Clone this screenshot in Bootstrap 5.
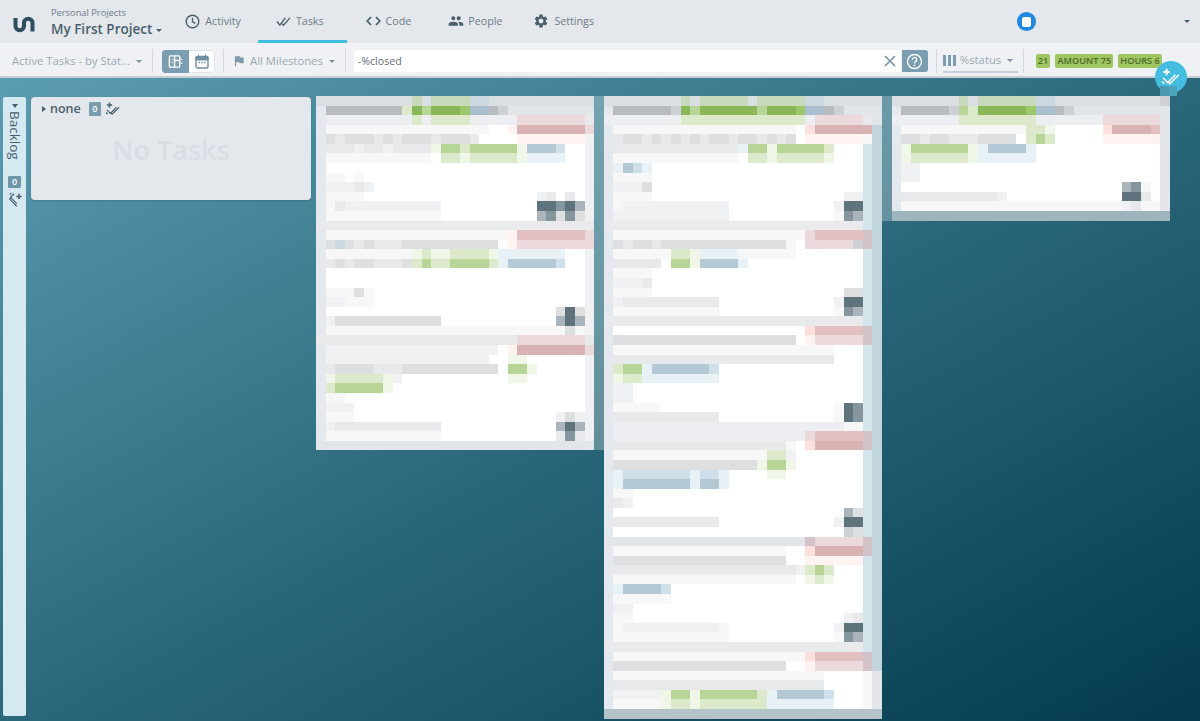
<!DOCTYPE html>
<html lang="en">
<head>
    <meta charset="UTF-8">
    <title>My First Project - Tasks</title>
    <meta name="viewport" content="width=device-width, initial-scale=1">
    <link href="https://cdn.jsdelivr.net/npm/bootstrap@5.3.3/dist/css/bootstrap.min.css" rel="stylesheet">
    <style>
        html, body { height: 721px; overflow: hidden; }
        body { font-family: "Open Sans", "Noto Sans", sans-serif; font-size: 12px; color: #6b7c85; background: #e4e7ec; }

        /* top bar */
        .top-bar { height: 43px; background: #e4e7ec; }
        .brand-logo { width: 40px; height: 43px; margin-left: 3px; margin-right: 8px; flex: none; }
        .project-org { font-size: 9.3px; line-height: 12px; color: #6f7f88; padding-top: 7px; }
        .project-name { font-size: 13.5px; line-height: 20px; font-weight: 600; color: #4a5f6b; text-decoration: none; }
        .project-name.dropdown-toggle::after { vertical-align: .18em; margin-left: 4px; border-width: 3.5px 3.5px 0; }
        .tab-nav { margin-left: 4px; }
        .tab-nav .nav-link { height: 43px; padding: 2px 18px 0; display: flex; align-items: center; gap: 5px; color: #6b7c85; font-size: 10.7px; border-bottom: 3px solid transparent; }
        .tab-nav .nav-item:first-child .nav-link { padding-left: 19px; padding-right: 17px; }
        .tab-nav .nav-link.active { border-bottom-color: #3fbfe0; padding-right: 23px; }
        .tab-nav .nav-item:nth-child(3) .nav-link { padding-left: 19px; padding-right: 19px; }
        .tab-nav .nav-item:nth-child(4) .nav-link { padding-right: 13px; gap: 4px; }
        .tab-nav svg { flex: none; fill: #4a5f6b; }
        .user-dot { width: 19px; height: 19px; border-radius: 50%; background: #1e88e5; margin-left: auto; margin-right: 148px; }
        .user-dot i { width: 9px; height: 10px; background: #fff; border-radius: 2px; display: block; }
        .user-caret { border-top: 3.5px solid #4a5f6b; border-left: 3px solid transparent; border-right: 3px solid transparent; margin-right: 10px; }

        /* filter bar */
        .filter-bar { height: 35px; background: #eff1f4; border-bottom: 2px solid #c9ced3; padding: 3px 0 0 12px; }
        .filter-link { color: #9aa9b2; font-size: 11.3px; text-decoration: none; white-space: nowrap; }
        .filter-link.dropdown-toggle::after { vertical-align: .15em; margin-left: 6px; border-width: 3.5px 3.5px 0; color: #7f929d; }
        .bar-sep { width: 1px; height: 24px; background: #d5d9de; flex: none; margin-left: 10px; }
        .view-group { margin-left: 9px; }
        .view-btn { width: 27px; height: 23px; padding: 0; display: flex; align-items: center; justify-content: center; background: #fff; border: 1px solid #e1e5ea; border-radius: 3px; }
        .view-btn.active, .view-btn.active:hover { background: #7a9db0; border-color: #7a9db0; }
        .search-box { width: 574px; height: 22px; }
        .search-box .form-control { height: 22px; min-height: 0; padding: 0 0 0 4px; border: 0; border-radius: 3px 0 0 3px; font-size: 10.6px; color: #5f6e76; box-shadow: none; }
        .search-clear { width: 22px; background: #fff; display: flex; align-items: center; justify-content: center; }
        .search-help { width: 26px; background: #7a9db0; display: flex; align-items: center; justify-content: center; border-radius: 0 3px 3px 0; margin-left: 1px !important; }
        .group-pick { height: 23px; width: 75px; margin-left: 6px; border-bottom: 2px solid #c5d0d8; color: #9aa9b2; }
        .group-pick + .bar-sep { margin-left: 5px; }
        .stat-list { gap: 5px; }
        .stat-badge { background: #9fc660; color: #4d6b2b; font-size: 9.2px; font-weight: 600; border-radius: 2px; padding: 0 2px; height: 14px; line-height: 14px; letter-spacing: 0; }

        /* add task button */
        .add-fab { position: absolute; left: 1155px; top: 61px; width: 32px; height: 32px; border-radius: 50%; background: #45bde0; display: flex; align-items: center; justify-content: center; z-index: 3; }
        .fab-chip { position: absolute; top: 86px; height: 10px; width: 9px; z-index: 4; }
        .fab-chip.one { left: 1160px; background: #4b9ab0; }
        .fab-chip.two { left: 1169px; width: 8px; background: #4ea4bc; }

        /* board */
        .board { height: 643px; padding: 18px 0 0 3px; overflow: hidden; background: linear-gradient(to bottom right, #5b9db1 0%, #2a6679 52%, #033a4d 100%); }
        .backlog-strip { width: 23px; height: 619px; margin-top: 1px; background: #d5e9f1; border-radius: 2px; flex: none; padding-top: 7px; }
        .strip-caret { border-top: 4px solid #4a5f6b; border-left: 3.500px solid transparent; border-right: 3.500px solid transparent; }
        .strip-title { writing-mode: vertical-rl; font-size: 13.5px; font-weight: 500; color: #4a5f6b; line-height: 14px; margin-top: 3px; }
        .count-chip { background: #6f97aa; color: #fff; font-size: 9px; font-weight: 600; border-radius: 1px; width: 13px; height: 12px; line-height: 12px; text-align: center; }
        .strip-add { transform: rotate(90deg); }
        .swimlane { width: 280px; height: 103px; margin: 1px 5px 0; background: #e4e7ec; border-radius: 4px; flex: none; padding: 5px 0 0 11px; box-shadow: 0 1px 2px rgba(0,0,0,.15); }
        .lane-caret { border-left: 4px solid #4a5f6b; border-top: 3.500px solid transparent; border-bottom: 3.500px solid transparent; }
        .lane-name { font-size: 12.5px; font-weight: 600; color: #4a5f6b; line-height: 14px; }
        .lane-count { width: 12px; height: 14px; line-height: 14px; background: #7a9db0; }
        .lane-empty { font-size: 27px; font-weight: 600; color: #d9dde4; line-height: 32px; text-align: center; margin: 18px 0 0 -11px; }

        /* blurred task columns */
        .mosaic { display: grid; grid-auto-rows: 9.58px; flex: none; align-self: flex-start; filter: blur(.6px); }
        .c-a { background: #f7f7f8; } .c-b { background: #f0f1f3; } .c-c { background: #e8e9eb; }
        .c-d { background: #dedfe1; } .c-e { background: #b8bcbf; } .c-f { background: #e3e9ee; }
        .c-g { background: #c8d9bc; } .c-h { background: #b7d596; } .c-i { background: #dde9cb; }
        .c-j { background: #f0f6e8; } .c-k { background: #b3c9d5; } .c-l { background: #cfe0ea; }
        .c-m { background: #e8f1f6; } .c-n { background: #cbd8e0; } .c-o { background: #cdd1d5; }
        .c-p { background: #d3e4ea; } .c-q { background: #c0d5dc; } .c-r { background: #d9b2b4; }
        .c-s { background: #e2bfc1; } .c-t { background: #ecd9dc; } .c-u { background: #fef3f1; }
        .c-v { background: #d9dfe3; } .c-w { background: #e3e6e9; } .c-x { background: #5f737d; }
        .c-y { background: #86969f; } .c-z { background: #aab4ba; } .c-dot { background: #fff; }
        .c-B { background: #b5c4cb; } .c-C { background: #9fb5bd; } .c-E { background: #eceef1; }
        .c-G { background: #8ab858; } .c-H { background: #9cc76a; } .c-N { background: #a9bfcd; }
        .c-O { background: #d3c3c9; } .c-R { background: #fde0de; } .c-S { background: #e9eaec; }
        .c-T { background: rgba(255,255,255,.27); }
    </style>
</head>
<body>

    <svg class="d-none">
        <symbol id="ic-checks" viewBox="0 0 16 12"><path d="M1 6l3 4 6-8M6.500 8.500l1.500 1.500 7-8" fill="none" stroke-width="1.500"/></symbol>
        <symbol id="ic-add" viewBox="0 0 18 16"><path d="M5 0.500v6M2 3.500h6" fill="none" stroke-width="1.800"/><path d="M2 9l4 4 7-7M1 12l2 2M7 13l1 1 8-8" fill="none" stroke-width="1.300"/></symbol>
    </svg>

    <header class="top-bar d-flex align-items-stretch">
        <svg class="brand-logo" viewBox="0 0 40 43"><path d="M12.500 18v8a4.250 4.250 0 0 0 8.500 0v-3a4.250 4.250 0 0 1 8.500 0v8.500" fill="none" stroke="#2f4f5f" stroke-width="4"/></svg>
        <div>
            <div class="project-org">Personal Projects</div>
            <a class="project-name dropdown-toggle" href="#">My First Project</a>
        </div>
        <ul class="nav tab-nav">
            <li class="nav-item">
                <a class="nav-link" href="#">
                    <svg width="15" height="15" viewBox="0 0 16 16"><circle cx="8" cy="8" r="6.700" fill="none" stroke="#4a5f6b" stroke-width="1.500"/><path d="M8 4v4.300l3 1.700" fill="none" stroke="#4a5f6b" stroke-width="1.400"/></svg>
                    Activity
                </a>
            </li>
            <li class="nav-item">
                <a class="nav-link active" href="#">
                    <svg width="15" height="11" stroke="#4a5f6b"><use href="#ic-checks"/></svg>
                    Tasks
                </a>
            </li>
            <li class="nav-item">
                <a class="nav-link" href="#">
                    <svg width="15" height="10" viewBox="0 0 15 10"><path d="M5 1L1.200 5 5 9M10 1l3.800 4L10 9" fill="none" stroke="#4a5f6b" stroke-width="1.700"/></svg>
                    Code
                </a>
            </li>
            <li class="nav-item">
                <a class="nav-link" href="#">
                    <svg width="16" height="16" viewBox="0 0 24 24"><path d="M16 11c1.660 0 2.990-1.340 2.990-3S17.660 5 16 5c-1.660 0-3 1.340-3 3s1.340 3 3 3zm-8 0c1.660 0 2.990-1.340 2.990-3S9.660 5 8 5C6.340 5 5 6.340 5 8s1.340 3 3 3zm0 2c-2.330 0-7 1.170-7 3.500V19h14v-2.500c0-2.330-4.670-3.500-7-3.500zm8 0c-.29 0-.62.02-.97.05 1.160.84 1.970 1.970 1.970 3.450V19h6v-2.500c0-2.330-4.670-3.500-7-3.500z"/></svg>
                    People
                </a>
            </li>
            <li class="nav-item">
                <a class="nav-link" href="#">
                    <svg width="16" height="16" viewBox="0 0 24 24"><path d="M19.140 12.940c.04-.3.06-.61.06-.94 0-.32-.02-.64-.07-.94l2.030-1.580c.18-.14.23-.41.12-.61l-1.920-3.320c-.12-.22-.37-.29-.59-.22l-2.390.96c-.5-.38-1.030-.7-1.620-.94l-.36-2.540c-.04-.24-.24-.41-.48-.41h-3.840c-.24 0-.43.17-.47.41l-.36 2.540c-.59.24-1.130.57-1.620.94l-2.390-.96c-.22-.08-.47 0-.59.22L2.740 8.870c-.12.21-.08.47.12.61l2.030 1.580c-.05.3-.09.63-.09.94s.02.64.07.94l-2.030 1.580c-.18.14-.23.41-.12.61l1.920 3.320c.12.22.37.29.59.22l2.390-.96c.5.38 1.030.7 1.620.94l.36 2.540c.05.24.24.41.48.41h3.840c.24 0 .44-.17.47-.41l.36-2.540c.59-.24 1.130-.56 1.620-.94l2.390.96c.22.08.47 0 .59-.22l1.920-3.320c.12-.22.07-.47-.12-.61l-2.010-1.580zM12 15.600c-1.980 0-3.600-1.620-3.600-3.600s1.620-3.600 3.600-3.600 3.600 1.620 3.600 3.600-1.620 3.600-3.600 3.600z"/></svg>
                    Settings
                </a>
            </li>
        </ul>
        <div class="user-dot align-self-center d-flex align-items-center justify-content-center"><i></i></div>
        <div class="user-caret align-self-center"></div>
    </header>

    <div class="filter-bar d-flex align-items-center">
        <a class="filter-link dropdown-toggle" href="#">Active Tasks - by Stat...</a>
        <span class="bar-sep"></span>
        <div class="btn-group view-group">
            <button class="btn view-btn active" type="button">
                <svg width="15" height="15" viewBox="0 0 16 16"><rect x="1.500" y="2" width="11" height="12" rx="1" fill="none" stroke="#fff" stroke-width="1.500"/><path d="M7 2v12M7 7h5.500M4 6h1M4 9h1M14.500 5v1.500M14.500 9v1.500" fill="none" stroke="#fff" stroke-width="1.500"/></svg>
            </button>
            <button class="btn view-btn" type="button">
                <svg width="14" height="15" viewBox="0 0 14 15"><rect x="1" y="2.500" width="12" height="11.500" rx="1.500" fill="none" stroke="#6f8fa3" stroke-width="1.400"/><path d="M1 6h12V3H1zM3.500 .5v3M10.500 .5v3" fill="#6f8fa3" stroke="#6f8fa3"/><path d="M3.500 8.500h1.500M6.300 8.500h1.500M9 8.500h1.500" stroke="#6f8fa3" stroke-width="1.500"/></svg>
            </button>
        </div>
        <span class="bar-sep ms-2"></span>
        <svg class="ms-2" width="14" height="14" viewBox="0 0 24 24" fill="#7f9aab"><path d="M14.400 6L14 4H5v17h2v-7h5.600l.4 2h7V6z"/></svg>
        <a class="filter-link dropdown-toggle ms-1" href="#">All Milestones</a>
        <span class="bar-sep"></span>
        <div class="input-group search-box flex-nowrap ms-2">
            <input class="form-control" type="text" value="-%closed">
            <span class="search-clear"><svg width="12" height="12" viewBox="0 0 12 12"><path d="M1 1l10 10M11 1L1 11" stroke="#6f8fa3" stroke-width="1.500"/></svg></span>
            <span class="search-help"><svg width="17" height="17" viewBox="0 0 17 17"><circle cx="8.500" cy="8.500" r="7" fill="none" stroke="#fff" stroke-width="1.400"/><path d="M6.300 6.800a2.200 2.200 0 1 1 3.300 1.900c-.7.4-1.100.8-1.100 1.700" fill="none" stroke="#fff" stroke-width="1.400"/><circle cx="8.500" cy="12.300" r=".9" fill="#fff"/></svg></span>
        </div>
        <span class="bar-sep ms-2"></span>
        <div class="group-pick d-flex align-items-center gap-1">
            <svg width="13" height="11" viewBox="0 0 13 11" fill="#7a9db0"><path d="M0 0h3v11H0zM5 0h3v11H5zM10 0h3v11h-3z"/></svg>
            <a class="filter-link dropdown-toggle" href="#">%status</a>
        </div>
        <span class="bar-sep"></span>
        <div class="d-flex stat-list ms-2 ps-1">
            <span class="badge stat-badge">21</span>
            <span class="badge stat-badge">AMOUNT 75</span>
            <span class="badge stat-badge">HOURS 6</span>
        </div>
    </div>

    <a class="add-fab" href="#"><svg width="20" height="18" stroke="#fff"><use href="#ic-add"/></svg></a>
    <span class="fab-chip one"></span>
    <span class="fab-chip two"></span>

    <main class="board d-flex align-items-start">
        <aside class="backlog-strip d-flex flex-column align-items-center">
            <div class="strip-caret"></div>
            <div class="strip-title">Backlog</div>
            <div class="count-chip mt-3">0</div>
            <svg class="strip-add mt-1" width="16" height="16" stroke="#4a5f6b" viewBox="0 0 18 16"><use href="#ic-add"/></svg>
        </aside>
        <section class="swimlane">
            <div class="d-flex align-items-center">
                <span class="lane-caret me-1"></span>
                <span class="lane-name">none</span>
                <span class="count-chip lane-count ms-2">0</span>
                <svg class="ms-1" width="16" height="14" stroke="#4a5f6b" viewBox="0 0 18 16"><use href="#ic-add"/></svg>
            </div>
            <div class="lane-empty">No Tasks</div>
        </section>
        <div id="board-columns" class="d-flex"></div>
    </main>

    <script src="https://cdn.jsdelivr.net/npm/bootstrap@5.3.3/dist/js/bootstrap.bundle.min.js"></script>
    <script>
        // blurred task cards, one letter per block, groups are cols 0 / 1-9 / 10-19 / 20-28
        const blank = "f ......... .......... ";
        const column1 = [
            "v vvvvvvvvv gvggggnnvv vvvvvvvvv",
            "f eeeeeeeei GhGGGHNNeo wwwwwwwww",
            "f EEEEEEEEE iEiiiiEEEE Etttttttc",
            "f aaaaaaaaa aaaaaaaa.. urrrrrrrt",
            "f dcdddcdcd ddcdddc... .uuuuuuub",
            "f cccbccbcc ccjhhihhhh hjkkkl..b",
            "f aaaaaaaaa aa.iijiiii ijmmmm..b",
            blank + "........b",
            "f aa.a..... .......... ........b",
            "f bbbcb.... .......... ........b",
            "f aaaa..... .......... ...bc.c.b",
            "f acbbbbbbb bbb....... ...xxyxzb",
            "f aaaaaaaaa aaa....... ...zydydb",
            "S SSSSSSSSS SSSSSSSSSS SSSSSSSSS",
            "f aaaaaaaaa aaaaaaaaaa ussssssst",
            "f dndcdcccd ddddddddd. utttttttt",
            "f aaaaaaaaa jijjiiiijm mmmmmm..b",
            "f cdcddcccd ihiihhhhim kkkkkl..b",
            blank + "........b",
            blank + "........b",
            "f aaada.... .......... ........b",
            "f bbaaa.... .......... ........b",
            "f ......... .......... .....dxdb",
            "f bdddddddd ddd....... .....zxzb",
            "f aaaaaaaaa aaaaaaaaaa aaaaaadab",
            "S SSSSSSSSS SSSSSSSSSS Stttttttc",
            "f bbbbbbbbb bbbbbbbbb. urrrrrrrt",
            "f bbbbbbbbb bbbbbbbb.. jj......b",
            "f cddddcccd ddddddddd. hhj.....b",
            "f jiiiiijb. .......... jj......b",
            "f ihhhhhj.. .......... ........b",
            "f aa....... .......... ........b",
            "f bbb...... .......... ........b",
            "f aaa...... .......... .....bdbb",
            "f bcccccccc ccc....... .....zxzb",
            "f aaaaaaaaa aaa....... .....cycb",
            "w wwwwwwwww wwwwwwwwww wwwwwwwww"
        ].map(r => r + "T");

        const column2 = [
            "v vvvvvvvgv gggggvgggg gnnvvvvvv",
            "f eeeeeeoGh GGGGGGhGGG HNNeowwww",
            "E EEEEEEEii iiiiiiiiii iEtttttcw",
            "f aaaaaaaaa aaaaaaaaaa .Rrrrrrrq",
            "f cddcdcdcd cddcddcdcd .uuuuuuaq",
            "f ccccccccc ccccmhhjhh hhhi...pq",
            "f aaaaaaaaa aaaa.iijii iiij...pq",
            "f mklm..... .......... .......pq",
            "f aaaa..... .......... .......pq",
            "f bbbd..... .......... .......pq",
            "f aaaa..... .......... .....bbpq",
            "f abbbbbbbb bbb....... ....bxxpq",
            "f bbbbbbbbb bbb....... ....ayzpq",
            "S SSSSSSSSS SSSSSSSSSS SSSSSSSpq",
            "f aaaaaaaaa aaaaaaaaaa atsssssOq",
            "f dcddcdddd ddddddddda .tttttoOq",
            "f aaaaaaiij mmmmaaaaaa .......pq",
            "f ccccc.hhj kkkkm..... .......pq",
            "f aaaa..... .......... .......pq",
            "f bbbc..... .......... .......pq",
            "f aaaa..... .......... .....ddpq",
            "f bcccccccc cc........ ....bxxpq",
            "f aaaaaaaaa aa........ ....ayzpq",
            "S SSSSSSSSS SSSSSSSSSS SSSSSSSpq",
            "f ......... .......... .RsssssOq",
            "f ddddddddd dddddddddd .utttttOq",
            "f aaaaaaaaa aaaaaaaaaa aaaa...pq",
            "f ccccccccc cccccccccc cccc...pq",
            "f ihhmkkkkk kl........ .......pq",
            "f jiimmmmmm mm........ .......pq",
            "f bb....... .......... .......pq",
            "f bb....... .......... .......pq",
            "f aaaaa.... .......... ....axypq",
            "f ccccccccc cc........ ....axypq",
            "f EEEEEEEEE EEEEEEEEEE EEEEEaapq",
            "f EEEEEEEEE EEEEEEEEEE EtsssssOq",
            "f ccccccccc ccccccccca .RrrrrrOq",
            "f aaaaaaaaa aaaaaaaiib .......pq",
            "f ddddddddd ddddddjhhj .......pq",
            "f mlllllllm llm....jj. .......pq",
            "f mkkkkkkkm kkm....... .......pq",
            "f aa....... .......... .......pq",
            "f cb....... .......... .......pq",
            "f ......... .......... .....zdpq",
            "f ccccccccc cc........ ....bxxpq",
            "f ......... .......... .....odpq",
            "w wwwwwwwww wwwwwwwwww wOtttttOq",
            "f aaaaaaaaa aaaaaaaaa. .RrrrrrOq",
            "f ddddddddd ddddddddd. .uuuuuupq",
            "f ccccccccc cccccccccc bihi...pq",
            "f aaaaaaaaa aaaaaaaaaa .jij...pq",
            "f mkkkkl... .......... .......pq",
            "f aaaaaa... .......... .......pq",
            "f bb....... .......... .......pq",
            "f aa....... .......... .....bcpq",
            "f abbbbbbbb bba....... ....bxxpq",
            "f aaaaaaaaa aaa....... ....ayzpq",
            "S SSSSSSSSS SSSSSSSSSS SSSSSSSpq",
            "f aaaaaaaaa aaaaaaaaaa aRsssssOq",
            "f ddddddddd ddddddddd. .utttttOq",
            "f aaaaaaaaa aaaaaaaaaa aaa....aw",
            "f ccccccccc cccccccccc ccc....aw",
            "f bbbbbjhhj hhhhhhimkk kkkl...aw",
            "f aaaaajiij iiiiiiimmm mmmm...aw",
            "B BBBBBBBBB BBBBBBBBBB BBBBBBBBB"
        ];

        const column3 = [
            "v vvvvvvgvg gggggnnvvv vvvvvvvvo",
            "f eeeeeohiG GGGGHNNeow wwwwwwwww",
            "E EEEEEEiii iiiiiEEEEE EEttttttw",
            "f aaaaaaaaa aaaaiij... ..Rrrrrsw",
            "f ddcddcccd ddd.ihi... ..uuuuuuw",
            "f jhhhhhhjm kkkkm..... ........w",
            "f jiiiiiijm mmmmm..... ........w",
            "f bb....... .......... ........w",
            "f bb....... .......... ........w",
            "f ......... .......... ....zya.w",
            "f ccccccccc cb........ ....xxc.w",
            "f aaaaaaaaa aaaaaaaaaa aaaabcaaw",
            "C CCCCCCCCC CCCCCCCCCC CCCCCCCCC"
        ].map(r => "T" + r);

        const holder = document.getElementById("board-columns");

        [column1, column2, column3].forEach(rows => {
            const grid = document.createElement("div");
            const cells = rows.map(r => r.replace(/ /g, ""));
            grid.className = "mosaic";
            grid.style.gridTemplateColumns = `repeat(${cells[0].length}, 9.6px)`;
            cells.forEach(row => {
                [...row].forEach(ch => {
                    const cell = document.createElement("span");
                    cell.className = ch === "." ? "c-dot" : `c-${ch}`;
                    grid.appendChild(cell);
                });
            });
            holder.appendChild(grid);
        });
    </script>
</body>
</html>
